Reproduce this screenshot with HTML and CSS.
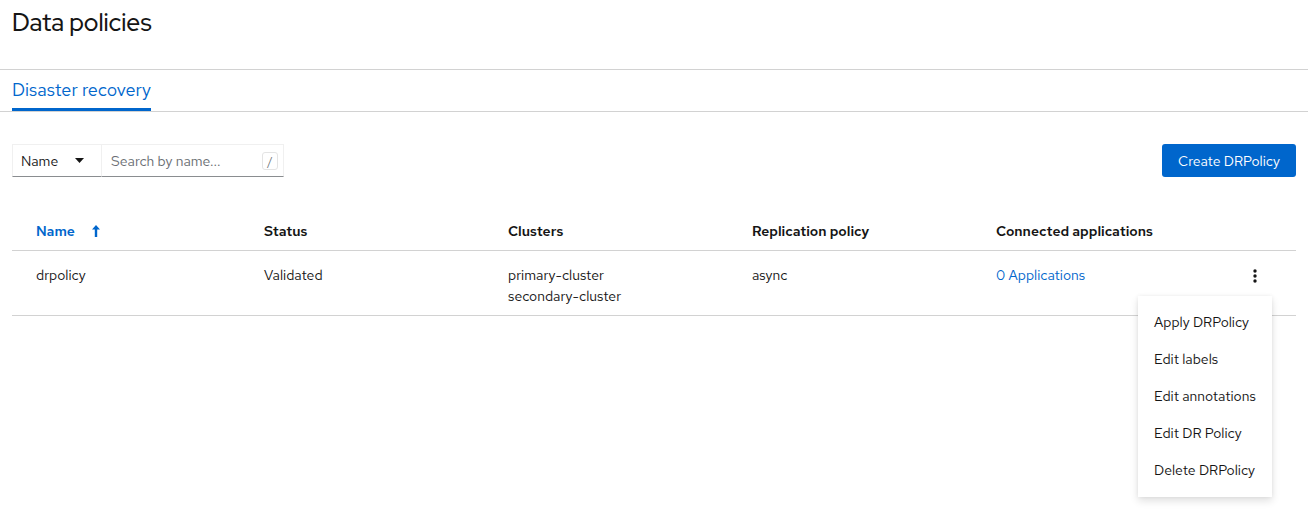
FILE: index.html
```html
<!DOCTYPE html>
<html>
<head>
<meta charset="utf-8">
<link rel="stylesheet" href="styles.css">
</head>
<body>
<div class="page">
  <header class="page-header">
    <h1 class="title">Data policies</h1>
  </header>
  <nav class="tabs">
    <div class="tab active">Disaster recovery</div>
  </nav>
  <section class="content">
    <div class="toolbar">
      <div class="filter">
        <div class="select">
          <span>Name</span>
          <svg class="caret" width="9" height="5" viewBox="0 0 9 5"><path d="M0 0h9L4.5 5z" fill="#151515"/></svg>
        </div>
        <div class="search">
          <span class="placeholder">Search by name...</span>
          <span class="kbd">/</span>
        </div>
      </div>
      <button class="btn-primary">Create DRPolicy</button>
    </div>
    <div class="table">
      <div class="row head">
        <div class="cell first sort">Name
          <svg class="sort-icon" width="8" height="12" viewBox="0 0 8 12"><path d="M4 0L8 4.5H5.2V12H2.8V4.5H0z" fill="#06c"/></svg>
        </div>
        <div class="cell">Status</div>
        <div class="cell">Clusters</div>
        <div class="cell">Replication policy</div>
        <div class="cell">Connected applications</div>
        <div class="cell"></div>
      </div>
      <div class="row body">
        <div class="cell first">drpolicy</div>
        <div class="cell">Validated</div>
        <div class="cell">primary-cluster<br>secondary-cluster</div>
        <div class="cell">async</div>
        <div class="cell"><a class="link">0 Applications</a></div>
        <div class="cell kebab-cell">
          <svg class="kebab" width="4" height="14" viewBox="0 0 4 14"><circle cx="2" cy="2" r="1.7" fill="#151515"/><circle cx="2" cy="7" r="1.7" fill="#151515"/><circle cx="2" cy="12" r="1.7" fill="#151515"/></svg>
          <ul class="menu">
            <li>Apply DRPolicy</li>
            <li>Edit labels</li>
            <li>Edit annotations</li>
            <li>Edit DR Policy</li>
            <li>Delete DRPolicy</li>
          </ul>
        </div>
      </div>
    </div>
  </section>
</div>
</body>
</html>
```
FILE: styles.css
```css
* { box-sizing: border-box; }
html, body { margin: 0; padding: 0; background: #fff; }
body {
  font-family: "Red Hat Text", "Open Sans", "Liberation Sans", sans-serif;
  color: #151515;
  font-size: 14px;
}
.page { width: 1308px; height: 520px; overflow: hidden; }
.page-header { height: 70px; border-bottom: 1px solid #d2d2d2; padding: 7px 12px 0; }
.title {
  margin: 0;
  font-family: "Red Hat Display", "Open Sans", "Liberation Sans", sans-serif;
  font-size: 24.5px;
  font-weight: 500;
  line-height: 30px;
}
.tabs { height: 42px; border-bottom: 1px solid #d2d2d2; padding: 0 12px; display: flex; }
.tab {
  color: #06c;
  font-size: 18px;
  line-height: 22px;
  padding-top: 9px;
  height: 41px;
  border-bottom: 3px solid #06c;
}
.content { padding: 32px 12px 0; }
.toolbar { display: flex; justify-content: space-between; align-items: center; height: 33px; }
.filter { display: flex; height: 33px; }
.select {
  width: 90px;
  display: flex;
  align-items: center;
  justify-content: space-between;
  padding: 0 17px 0 8px;
  border: 1px solid #f0f0f0;
  border-bottom-color: #8a8d90;
  font-size: 14px;
}
.search {
  width: 182px;
  display: flex;
  align-items: center;
  justify-content: space-between;
  padding: 0 5px 0 9px;
  border: 1px solid #f0f0f0;
  border-left: none;
  border-bottom-color: #8a8d90;
}
.placeholder { color: #6a6e73; font-size: 14px; }
.kbd {
  display: inline-flex;
  align-items: center;
  justify-content: center;
  width: 16px;
  height: 18px;
  border: 1px solid #e4e4e4;
  border-radius: 3px;
  font-size: 11px;
  color: #6a6e73;
}
.btn-primary {
  background: #06c;
  color: #fff;
  border: none;
  border-radius: 3px;
  height: 33px;
  width: 134px;
  font-family: inherit;
  font-size: 14px;
  padding: 0;
}
.table { margin-top: 36px; }
.row {
  display: grid;
  grid-template-columns: 236px 244px 244px 244px 244px 1fr;
  border-bottom: 1px solid #d2d2d2;
}
.row.head { height: 38px; align-items: center; font-weight: 600; padding-bottom: 1px; }
.row.body { height: 65px; align-items: start; padding-top: 14px; line-height: 21px; }
.cell { padding-left: 16px; }
.cell.first { padding-left: 24px; }
.sort { color: #06c; display: flex; align-items: center; }
.sort-icon { margin-left: 17px; }
.link { color: #06c; }
.kebab-cell { position: relative; padding-left: 29px; padding-top: 4px; }
.kebab { display: block; }
.menu {
  position: absolute;
  top: 31px;
  left: -86px;
  width: 134px;
  margin: 0;
  padding: 8px 0;
  list-style: none;
  background: #fff;
  box-shadow: 0 4px 8px rgba(3,3,3,0.12), 0 0 4px rgba(3,3,3,0.06);
  z-index: 2;
}
.menu li { height: 37px; line-height: 37px; padding-left: 16px; white-space: nowrap; }
```
